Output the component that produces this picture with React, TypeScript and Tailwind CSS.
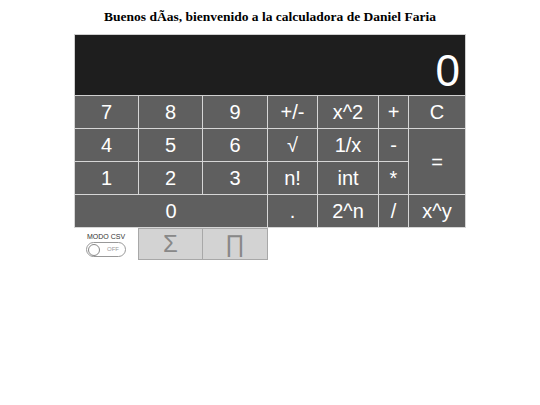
const cols = "grid-cols-[63px_63px_64px_49px_60px_29px_56px]";

function Key({ label, className = "" }: { label: string; className?: string }) {
  return (
    <div
      className={`flex items-center justify-center bg-[#5f5f5f] text-[20px] text-white ${className}`}
    >
      {label}
    </div>
  );
}

export default function App() {
  return (
    <div className="min-h-screen bg-white font-['Liberation_Sans',Arial,sans-serif]">
      <h1 className="pt-[9px] text-center font-['Liberation_Serif',serif] text-[13.5px] font-bold leading-[16px] text-black">
        Buenos dÃas, bienvenido a la calculadora de Daniel Faria
      </h1>
      <div className="mx-auto mt-[9px] w-[392px]">
        <div className="flex h-[62px] items-end justify-end border border-[#cfcfcf] bg-[#1e1e1e] pr-[5px] pb-0 text-[44px] leading-[48px] font-light text-white">
          0
        </div>
        <div className={`grid ${cols} grid-rows-[32px_32px_32px_32px] gap-px border border-t-0 border-[#d6d6d6] bg-[#d6d6d6]`}>
          <Key label="7" />
          <Key label="8" />
          <Key label="9" />
          <Key label="+/-" />
          <Key label="x^2" />
          <Key label="+" />
          <Key label="C" />
          <Key label="4" />
          <Key label="5" />
          <Key label="6" />
          <Key label="√" />
          <Key label="1/x" />
          <Key label="-" />
          <Key label="=" className="row-span-2" />
          <Key label="1" />
          <Key label="2" />
          <Key label="3" />
          <Key label="n!" />
          <Key label="int" />
          <Key label="*" />
          <Key label="0" className="col-span-3" />
          <Key label="." />
          <Key label="2^n" />
          <Key label="/" />
          <Key label="x^y" />
        </div>
        <div className="flex h-[32px]">
          <div className="flex w-[64px] flex-col items-center justify-center pt-[2px]">
            <span className="text-[7px] leading-[8px] text-[#333]">MODO CSV</span>
            <div className="mt-px flex h-[15px] w-[40px] items-center rounded-full border border-[#999] bg-white">
              <span className="ml-px h-[12px] w-[12px] rounded-full border border-[#888] bg-white" />
              <span className="ml-[7px] text-[6px] text-[#999]">OFF</span>
            </div>
          </div>
          <div className="flex w-[65px] items-center justify-center border border-[#a8a8a8] bg-[#d3d3d3] text-[24px] text-[#888]">
            Σ
          </div>
          <div className="flex w-[65px] items-center justify-center border border-l-0 border-[#a8a8a8] bg-[#d3d3d3] text-[24px] text-[#888]">
            ∏
          </div>
        </div>
      </div>
    </div>
  );
}
